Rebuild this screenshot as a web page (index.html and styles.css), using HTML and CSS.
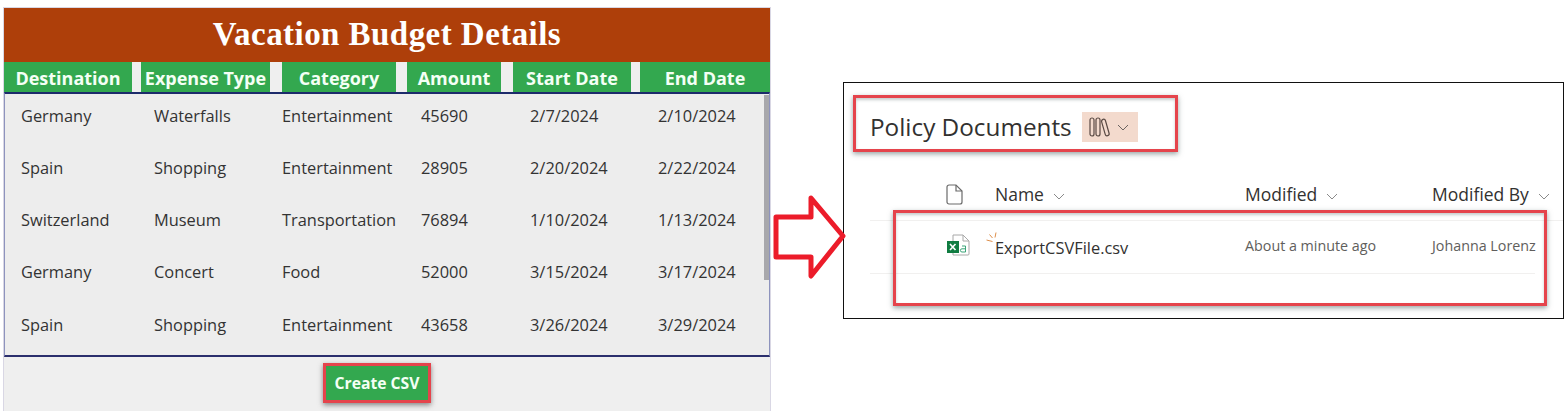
FILE: index.html
```html
<!DOCTYPE html>
<html lang="en">
<head>
  <meta charset="UTF-8">
  <meta name="viewport" content="width=device-width, initial-scale=1.0">
  <title>Vacation Budget Details</title>
  <link rel="stylesheet" href="styles.css">
</head>
<body>
  <div class="page">

    <!-- canvas app -->
    <div class="app">
      <h1 class="app-title">Vacation Budget Details</h1>
      <div class="head-row">
        <div class="head-cell hc1">Destination</div>
        <div class="head-cell hc2">Expense Type</div>
        <div class="head-cell hc3">Category</div>
        <div class="head-cell hc4">Amount</div>
        <div class="head-cell hc5">Start Date</div>
        <div class="head-cell hc6">End Date</div>
      </div>
      <div class="gallery">
        <div class="scroll-thumb"></div>
        <div class="row"><span>Germany</span><span>Waterfalls</span><span>Entertainment</span><span>45690</span><span>2/7/2024</span><span>2/10/2024</span></div>
        <div class="row"><span>Spain</span><span>Shopping</span><span>Entertainment</span><span>28905</span><span>2/20/2024</span><span>2/22/2024</span></div>
        <div class="row"><span>Switzerland</span><span>Museum</span><span>Transportation</span><span>76894</span><span>1/10/2024</span><span>1/13/2024</span></div>
        <div class="row"><span>Germany</span><span>Concert</span><span>Food</span><span>52000</span><span>3/15/2024</span><span>3/17/2024</span></div>
        <div class="row"><span>Spain</span><span>Shopping</span><span>Entertainment</span><span>43658</span><span>3/26/2024</span><span>3/29/2024</span></div>
      </div>
      <div class="app-foot">
        <button class="csv-btn" type="button">Create CSV</button>
      </div>
    </div>

    <svg class="arrow" width="78" height="90" viewBox="0 0 78 90">
      <polygon points="5,24 40,24 40,5 72,43 40,83 40,64 5,64" fill="#fff" stroke="#ec1c2a" stroke-width="5" stroke-linejoin="round"/>
    </svg>

    <!-- sharepoint library -->
    <div class="library">
      <div class="lib-title">
        <span>Policy Documents</span>
        <span class="lib-pill">
          <svg width="22" height="20" viewBox="0 0 22 20" fill="none" stroke="#5a4a44" stroke-width="1.2">
            <rect x="1" y="1" width="4" height="18" rx="2"/>
            <rect x="7" y="1" width="4" height="18" rx="2"/>
            <rect x="14.5" y="2" width="4" height="17" rx="2" transform="rotate(-16 16.5 11)"/>
          </svg>
          <svg class="chev" width="12" height="7" viewBox="0 0 12 7"><path d="M1 1l5 5 5-5" fill="none" stroke="#6b6360" stroke-width="1"/></svg>
        </span>
      </div>
      <div class="lib-head">
        <span class="file-col">
          <svg width="17" height="21" viewBox="0 0 17 21" fill="none" stroke="#6a6a6a" stroke-width="1.2">
            <path d="M1 3a2 2 0 0 1 2-2h7l6 6v11a2 2 0 0 1-2 2H3a2 2 0 0 1-2-2z"/>
            <path d="M10 1v6h6"/>
          </svg>
        </span>
        <span class="col-name">Name<svg class="chev" width="12" height="7" viewBox="0 0 12 7"><path d="M1 1l5 5 5-5" fill="none" stroke="#8a8a8a" stroke-width="1"/></svg></span>
        <span class="col-name">Modified<svg class="chev" width="12" height="7" viewBox="0 0 12 7"><path d="M1 1l5 5 5-5" fill="none" stroke="#8a8a8a" stroke-width="1"/></svg></span>
        <span class="col-name">Modified By<svg class="chev" width="12" height="7" viewBox="0 0 12 7"><path d="M1 1l5 5 5-5" fill="none" stroke="#8a8a8a" stroke-width="1"/></svg></span>
      </div>
      <div class="lib-row">
        <span class="file-col">
          <svg width="24" height="22" viewBox="0 0 24 22">
            <path d="M7 1h10l6 6v13a1 1 0 0 1-1 1H7z" fill="#fff" stroke="#a8a8a8"/>
            <path d="M17 1v6h6" fill="none" stroke="#a8a8a8"/>
            <rect x="1" y="7" width="12" height="12" fill="#107c41"/>
            <path d="M4 10l5.500 6M9.500 10L4 16" stroke="#fff" stroke-width="1.6"/>
            <path d="M16 12h3.500v6H16a1.600 1.600 0 0 1 0-3.200h3.500" fill="none" stroke="#3aa578" stroke-width="1"/>
          </svg>
        </span>
        <span class="file-name">
          <svg class="new-mark" width="13" height="13" viewBox="0 0 13 13" fill="none" stroke="#dd8f4c" stroke-width="1">
            <path d="M0.500 8l6 1.500M3.500 2.500l3 3.500M10 0.500l-1 5"/>
          </svg>ExportCSVFile.csv</span>
        <span class="cell-small">About a minute ago</span>
        <span class="cell-small">Johanna Lorenz</span>
      </div>
      <div class="mark mark-title"></div>
      <div class="mark mark-row"></div>
    </div>

  </div>
</body>
</html>
```

FILE: styles.css
```css
html, body {
  margin: 0;
  padding: 0;
  background: #fff;
}
.page {
  display: flex;
  align-items: flex-start;
  height: 411px;
  overflow: hidden;
  font-family: "Open Sans", sans-serif;
}

/* left panel */
.app {
  width: 768px;
  height: 404px;
  margin: 7px 0 0 3px;
  flex: none;
  background: #efefef;
  border: solid #d9d7e4;
  border-width: 1px 1px 0 1px;
  box-sizing: border-box;
}
.app-title {
  margin: 0;
  height: 54px;
  background: #ae3f0a;
  color: #fff;
  font-family: "Liberation Serif", serif;
  font-size: 33px;
  font-weight: 700;
  letter-spacing: 0.450px;
  line-height: 52px;
  text-align: center;
}
.head-row {
  display: flex;
  height: 30px;
}
.head-cell {
  background: #33a84f;
  color: #f4fff5;
  font-size: 18px;
  font-weight: 700;
  line-height: 33px;
  text-align: center;
  white-space: nowrap;
}
.hc1 { width: 128px; margin-right: 9px; }
.hc2 { width: 129px; margin-right: 12px; }
.hc3 { width: 114px; margin-right: 11px; }
.hc4 { width: 94px; margin-right: 12px; }
.hc5 { width: 118px; margin-right: 9px; }
.hc6 { width: 130px; }

.gallery {
  position: relative;
  height: 265px;
  box-sizing: border-box;
  background: #ededed;
  border: 1px solid #8d93bd;
  border-top: 2px solid #1d2b6b;
  border-bottom: 2px solid #2b2f6d;
}
.scroll-thumb {
  position: absolute;
  top: 1px;
  right: 0;
  width: 5px;
  height: 185px;
  background: #a8a8ac;
}
.row {
  display: grid;
  grid-template-columns: 133px 128px 139px 109px 128px 1fr;
  align-items: center;
  height: 52.250px;
  box-sizing: border-box;
  padding: 0 0 10px 16px;
  color: #333;
  font-size: 16.400px;
  white-space: nowrap;
}
.app-foot {
  display: flex;
  justify-content: center;
  padding: 6px 20px 0 0;
}
.csv-btn {
  width: 108px;
  height: 40px;
  box-sizing: border-box;
  background: #33a84f;
  border: 3px solid #e5444c;
  color: #f4fff5;
  font-family: "Open Sans", sans-serif;
  font-size: 15.700px;
  font-weight: 700;
  padding: 0;
  box-shadow: 0 2px 5px rgba(60, 60, 60, 0.6);
}

/* arrow between the two */
.arrow {
  flex: none;
  margin-top: 193px;
  position: relative;
  z-index: 2;
}

/* right panel */
.library {
  position: relative;
  flex: none;
  width: 721px;
  height: 237px;
  margin: 82px 0 0 -6px;
  box-sizing: border-box;
  border: 1px solid #111;
  background: #fff;
  padding: 0 0 0 26px;
  color: #323130;
}
.lib-title {
  display: flex;
  align-items: center;
  gap: 10px;
  height: 30px;
  margin-top: 29px;
  font-size: 24.300px;
}
.lib-title > span:first-child {
  margin-bottom: 2px;
}
.lib-pill {
  display: flex;
  align-items: center;
  gap: 6px;
  width: 56px;
  height: 30px;
  box-sizing: border-box;
  padding-left: 7px;
  background: #f3dacd;
}
.chev {
  vertical-align: middle;
  margin-left: 9px;
}
.lib-pill .chev {
  margin-left: 0;
}
.lib-head, .lib-row {
  display: grid;
  grid-template-columns: 125px 250px 187px 1fr;
  align-items: center;
  white-space: nowrap;
}
.lib-head {
  height: 50px;
  box-sizing: border-box;
  margin-top: 29px;
  padding-bottom: 3px;
  border-bottom: 1px solid #f1f0ef;
  font-size: 17.500px;
}
.lib-row {
  height: 53px;
  box-sizing: border-box;
  margin-right: 28px;
  padding-bottom: 4px;
  border-bottom: 1px solid #f1f0ef;
}
.file-col {
  display: flex;
  padding-left: 76px;
}
.file-name {
  position: relative;
  margin-top: 4px;
  font-size: 16.400px;
}
.new-mark {
  position: absolute;
  left: -9px;
  top: -4px;
}
.cell-small {
  font-size: 14.300px;
  color: #605e5c;
}

/* red highlight boxes drawn over the screenshot */
.mark {
  position: absolute;
  box-sizing: border-box;
  border: 3px solid #e5444c;
  box-shadow: 0 2px 5px rgba(70, 90, 90, 0.55), inset 0 2px 3px rgba(70, 90, 90, 0.3);
}
.mark-title {
  left: 9px;
  top: 12px;
  width: 325px;
  height: 57px;
}
.mark-row {
  left: 49px;
  top: 127px;
  width: 654px;
  height: 96px;
}
```
